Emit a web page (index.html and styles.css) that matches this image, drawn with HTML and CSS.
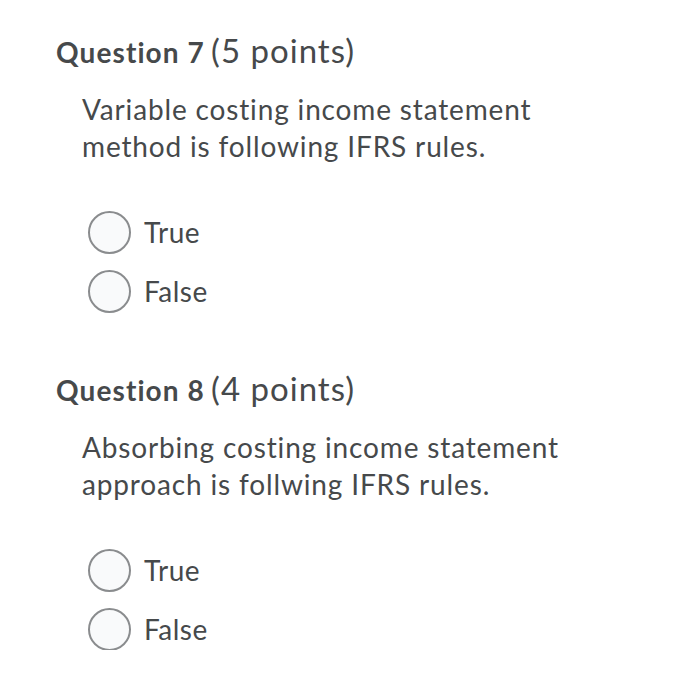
FILE: index.html
```html
<!DOCTYPE html>
<html>
<head>
<meta charset="utf-8">
<link rel="stylesheet" href="styles.css">
</head>
<body>
<div class="page">
  <section class="question">
    <h2 class="q-title"><span class="q-num">Question 7</span> <span class="q-pts">(5 points)</span></h2>
    <p class="q-text">Variable costing income statement method is following IFRS rules.</p>
    <div class="options">
      <label class="option"><span class="radio"></span><span class="opt-label">True</span></label>
      <label class="option"><span class="radio"></span><span class="opt-label">False</span></label>
    </div>
  </section>
  <section class="question">
    <h2 class="q-title"><span class="q-num">Question 8</span> <span class="q-pts">(4 points)</span></h2>
    <p class="q-text">Absorbing costing income statement approach is follwing IFRS rules.</p>
    <div class="options">
      <label class="option"><span class="radio"></span><span class="opt-label">True</span></label>
      <label class="option"><span class="radio"></span><span class="opt-label">False</span></label>
    </div>
  </section>
</div>
</body>
</html>
```
FILE: styles.css
```css
html, body {
  margin: 0;
  padding: 0;
  background: #ffffff;
}
body {
  font-family: Lato, "Open Sans", sans-serif;
  color: #46494b;
}
.page {
  padding: 28px 0 0 56px;
  display: flex;
  flex-direction: column;
  gap: 54px;
}
.question {
  display: flex;
  flex-direction: column;
}
.q-title {
  margin: 0;
  font-weight: normal;
  line-height: 44px;
}
.q-num {
  font-weight: 700;
  font-size: 28px;
  letter-spacing: 1.1px;
}
.q-pts {
  font-size: 33px;
  letter-spacing: 1px;
}
.q-text {
  margin: 15px 0 0 26px;
  width: 500px;
  font-size: 28px;
  line-height: 37px;
  letter-spacing: 0.85px;
}
.options {
  margin: 46px 0 0 32px;
  display: flex;
  flex-direction: column;
  gap: 17px;
}
.option {
  display: flex;
  align-items: center;
  gap: 13px;
  height: 42px;
}
.radio {
  width: 39px;
  height: 39px;
  border: 2px solid #8a8c8e;
  border-radius: 50%;
  background: #f9fafb;
  flex: none;
}
.opt-label {
  font-size: 28px;
  letter-spacing: 0.5px;
}
```
